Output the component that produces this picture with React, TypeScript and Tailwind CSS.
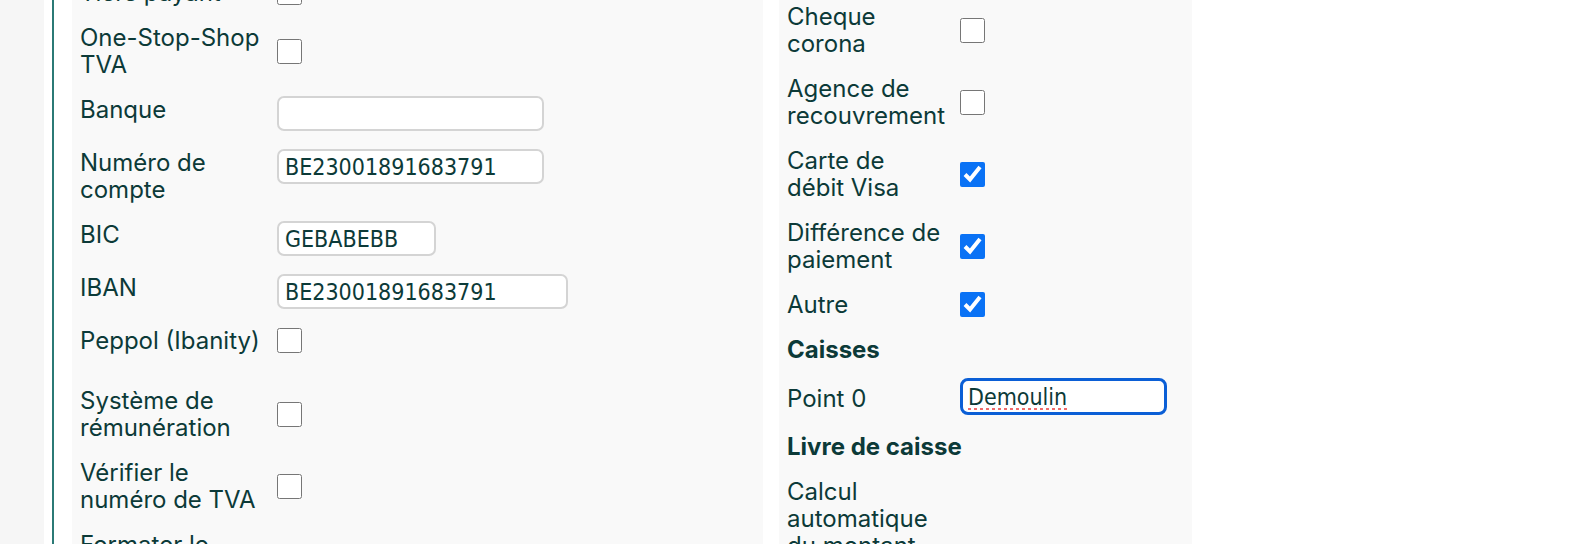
import React from 'react';

type Left =
  | { kind: 'check'; label: string; checked?: boolean; extra?: string }
  | { kind: 'input'; label: string; value: string; width: string };

const leftRows: Left[] = [
  { kind: 'check', label: 'Tiers payant' },
  { kind: 'check', label: 'One-Stop-Shop TVA' },
  { kind: 'input', label: 'Banque', value: '', width: 'w-[267px]' },
  { kind: 'input', label: 'Numéro de compte', value: 'BE23001891683791', width: 'w-[267px]' },
  { kind: 'input', label: 'BIC', value: 'GEBABEBB', width: 'w-[159px]' },
  { kind: 'input', label: 'IBAN', value: 'BE23001891683791', width: 'w-[291px]' },
  { kind: 'check', label: 'Peppol (Ibanity)' },
  { kind: 'check', label: 'Système de rémunération', extra: 'mt-[15px]' },
  { kind: 'check', label: 'Vérifier le numéro de TVA' },
  { kind: 'check', label: 'Formater le numéro de TVA' },
];

const rightChecks = [
  { label: 'Cheque corona', checked: false },
  { label: 'Agence de recouvrement', checked: false },
  { label: 'Carte de débit Visa', checked: true },
  { label: 'Différence de paiement', checked: true },
  { label: 'Autre', checked: true },
];

const inputFont = "font-['DejaVu_Sans_Condensed','DejaVu_Sans',sans-serif] font-stretch-condensed";

function Checkbox({ checked }: { checked?: boolean }) {
  return (
    <input
      type="checkbox"
      defaultChecked={checked}
      className="w-[25px] h-[25px] shrink-0 accent-[#0a72f5]"
    />
  );
}

export default function App() {
  return (
    <div className="flex h-[544px] overflow-hidden bg-white font-['Inter','Noto_Sans',sans-serif] text-[24px] leading-[27px] text-[#0c3a38]">
      <div className="w-[44px] shrink-0 bg-[#f6f6f6]" />
      <div className="ml-[8px] w-[2px] shrink-0 bg-[#2b7a76]" />

      {/* fiche client, colonne gauche */}
      <div className="ml-[18px] w-[691px] shrink-0 bg-[#f9f9f9] px-2">
        <div className="-mt-[21px] flex flex-col gap-[18px]">
          {leftRows.map((row) =>
            row.kind === 'check' ? (
              <div key={row.label} className={`flex items-center ${row.extra ?? ''}`}>
                <div className="w-[197px] shrink-0 pr-[14px]">{row.label}</div>
                <Checkbox checked={row.checked} />
              </div>
            ) : (
              <div key={row.label} className="flex items-start">
                <div className="w-[197px] shrink-0 pr-[14px]">{row.label}</div>
                <input
                  type="text"
                  defaultValue={row.value}
                  className={`${row.width} h-[35px] rounded-[7px] border-2 border-[#d4d4d4] bg-white px-[6px] text-[23px] text-[#0c3a38] outline-none ${inputFont}`}
                />
              </div>
            )
          )}
        </div>
      </div>

      {/* colonne droite */}
      <div className="ml-[16px] w-[413px] shrink-0 bg-[#f9f9f9] px-2">
        <div className="flex flex-col gap-[18px] pt-[3px]">
          {rightChecks.map((row) => (
            <div key={row.label} className="flex items-center">
              <div className="w-[173px] shrink-0 pr-[15px]">{row.label}</div>
              <Checkbox checked={row.checked} />
            </div>
          ))}
          <div className="font-bold">Caisses</div>
          <div className="-mt-[3px] flex items-start">
            <div className="mt-[7px] w-[173px] shrink-0 pr-[15px]">Point 0</div>
            <input
              type="text"
              defaultValue="Demoulin"
              className={`w-[207px] h-[37px] rounded-[8px] border-[3px] border-[#0b5fd6] bg-white px-[5px] text-[23px] text-[#0c3a38] outline-none underline decoration-dotted decoration-[#ef6b6b] decoration-[3px] underline-offset-[3px] ${inputFont}`}
            />
          </div>
          <div className="font-bold">Livre de caisse</div>
          <div className="flex items-start">
            <div className="w-[173px] shrink-0 pr-[15px]">Calcul automatique du montant</div>
          </div>
        </div>
      </div>
    </div>
  );
}
